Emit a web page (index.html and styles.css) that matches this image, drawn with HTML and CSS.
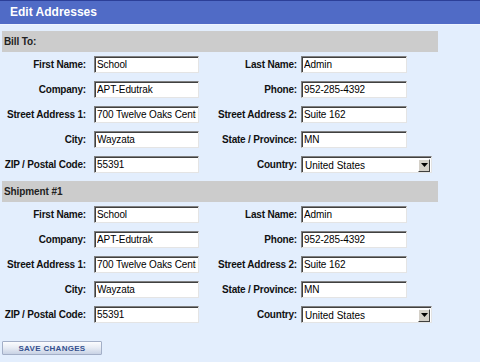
FILE: index.html
```html
<!DOCTYPE html>
<html lang="en">
<head>
  <meta charset="UTF-8" />
  <title>Edit Addresses</title>
  <link rel="stylesheet" href="styles.css">
</head>
<body>

<div class="titlebar">Edit Addresses</div>

<form class="content">
  <div class="block">
    <div class="block-head">Bill To:</div>
    <div class="fields">
      <label>First Name:</label>
      <input type="text" value="School" />
      <label class="right">Last Name:</label>
      <input type="text" value="Admin" />

      <label>Company:</label>
      <input type="text" value="APT-Edutrak" />
      <label class="right">Phone:</label>
      <input type="text" value="952-285-4392" />

      <label>Street Address 1:</label>
      <input type="text" value="700 Twelve Oaks Center Dr" />
      <label class="right">Street Address 2:</label>
      <input type="text" value="Suite 162" />

      <label>City:</label>
      <input type="text" value="Wayzata" />
      <label class="right">State / Province:</label>
      <input type="text" value="MN" />

      <label>ZIP / Postal Code:</label>
      <input type="text" value="55391" />
      <label class="right">Country:</label>
      <div class="select">
        <span class="select-text">United States</span>
        <span class="select-btn">
          <svg width="7" height="4" viewBox="0 0 7 4"><path d="M0 0h7L3.5 4z" fill="#000"/></svg>
        </span>
      </div>
    </div>
  </div>

  <div class="block">
    <div class="block-head">Shipment #1</div>
    <div class="fields">
      <label>First Name:</label>
      <input type="text" value="School" />
      <label class="right">Last Name:</label>
      <input type="text" value="Admin" />

      <label>Company:</label>
      <input type="text" value="APT-Edutrak" />
      <label class="right">Phone:</label>
      <input type="text" value="952-285-4392" />

      <label>Street Address 1:</label>
      <input type="text" value="700 Twelve Oaks Center Dr" />
      <label class="right">Street Address 2:</label>
      <input type="text" value="Suite 162" />

      <label>City:</label>
      <input type="text" value="Wayzata" />
      <label class="right">State / Province:</label>
      <input type="text" value="MN" />

      <label>ZIP / Postal Code:</label>
      <input type="text" value="55391" />
      <label class="right">Country:</label>
      <div class="select">
        <span class="select-text">United States</span>
        <span class="select-btn">
          <svg width="7" height="4" viewBox="0 0 7 4"><path d="M0 0h7L3.5 4z" fill="#000"/></svg>
        </span>
      </div>
    </div>
  </div>

  <button type="button" class="save">SAVE CHANGES</button>
</form>

</body>
</html>
```

FILE: styles.css
```css
* {
  margin: 0;
  padding: 0;
  box-sizing: border-box;
}
body {
  font-family: 'Liberation Sans', Arial, sans-serif;
  background-color: #e3eefd;
  overflow: hidden;
}

.titlebar {
  height: 25px;
  background-color: #506bc6;
  border-top: 1px solid #2c3f98;
  border-bottom: 1px solid #eef4ff;
  color: #fff;
  font-size: 12px;
  font-weight: bold;
  line-height: 22px;
  padding-left: 10px;
}

.content {
  padding: 6px 0 0 2px;
}

.block-head {
  width: 436px;
  height: 21px;
  background-color: #cccccc;
  font-size: 10px;
  font-weight: bold;
  color: #222;
  line-height: 21px;
  padding-left: 2px;
  letter-spacing: -0.1px;
}

.fields {
  display: grid;
  grid-template-columns: 92px 105px 102px auto;
  grid-auto-rows: 17px;
  row-gap: 8px;
  align-items: center;
  padding: 4px 0 8px;
}
label {
  font-size: 10px;
  font-weight: bold;
  color: #111;
  text-align: right;
  white-space: nowrap;
  letter-spacing: -0.2px;
  padding-right: 8px;
}
label.right {
  padding-right: 4px;
}
input[type="text"] {
  width: 105px;
  height: 17px;
  font-family: 'Liberation Sans', Arial, sans-serif;
  font-size: 10px;
  letter-spacing: -0.1px;
  color: #000;
  background: #fff;
  padding: 0 2px;
  border: 1px solid;
  border-color: #808080 #e4e4e4 #e4e4e4 #808080;
  box-shadow: inset 1px 1px 0 #404040;
  outline: none;
}
input[type="text"]:nth-of-type(even) {
  width: 106px;
}

.select {
  width: 131px;
  height: 17px;
  display: flex;
  align-items: center;
  justify-content: space-between;
  background: #fff;
  border: 1px solid;
  border-color: #808080 #e4e4e4 #e4e4e4 #808080;
  box-shadow: inset 1px 1px 0 #404040;
  padding: 2px 1px 1px 3px;
  font-size: 10px;
}
.select-btn {
  width: 12px;
  height: 13px;
  background: #d4d0c8;
  border: 1px solid;
  border-color: #fff #404040 #404040 #fff;
  display: flex;
  align-items: center;
  justify-content: center;
}

.save {
  margin-top: 10px;
  width: 100px;
  height: 14px;
  font-family: 'Liberation Sans', Arial, sans-serif;
  font-size: 8px;
  font-weight: bold;
  color: #34508f;
  letter-spacing: 0.3px;
  background: linear-gradient(#fbfcfe, #e6ebf4 50%, #c8d2e5);
  border: 1px solid #a3afc7;
  border-radius: 1px;
  cursor: pointer;
}
```
